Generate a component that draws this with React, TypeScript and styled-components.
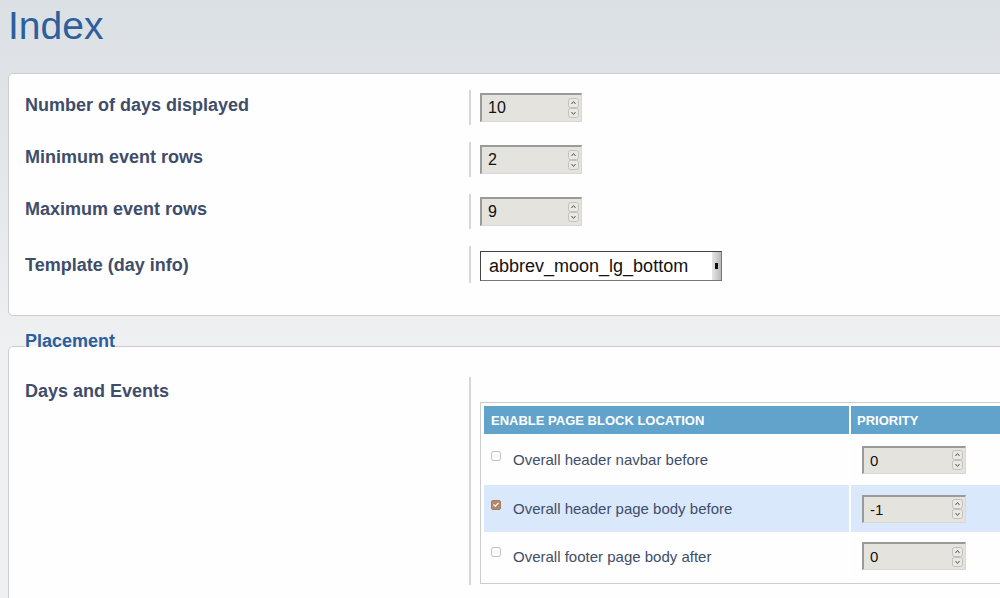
import React from 'react'
import styled, { createGlobalStyle } from 'styled-components'

const GlobalStyle = createGlobalStyle`
  html, body {
    margin: 0;
    padding: 0;
    overflow: hidden;
  }
  body {
    background: #eef0f2 linear-gradient(#dbe0e4 0, #e2e6e9 150px, #eef0f2 340px) no-repeat;
    font-family: "Liberation Sans", Arial, sans-serif;
    min-height: 598px;
  }
`

const Page = styled.div`
  padding-left: 8px;
`

const Title = styled.h1`
  margin: 4px 0 0;
  font-size: 39px;
  font-weight: normal;
  line-height: 44px;
  color: #2d5f9d;
`

const Panel = styled.div`
  margin: 25px -40px 0 0;
  padding: 16px 0 32px 16px;
  background: #fdfefd;
  border: 1px solid #cdcdcd;
  border-radius: 5px;
  display: flex;
  flex-direction: column;
  gap: 17px;
`

const Fieldset = styled.fieldset`
  margin: 15px -40px 0 0;
  padding: 16px 0 40px 16px;
  min-width: 0;
  background: #fdfefd;
  border: 1px solid #cdcdcd;
  border-radius: 5px;
`

const Legend = styled.legend`
  padding: 0 0 10px;
  font-size: 18px;
  line-height: 20px;
  font-weight: bold;
  color: #2b5e9c;
`

const Row = styled.div`
  display: grid;
  grid-template-columns: 444px 1fr;
`

const Label = styled.div<{ $top?: number }>`
  padding-top: ${(p) => p.$top ?? 4}px;
  font-size: 18px;
  line-height: 22px;
  font-weight: bold;
  color: #3f4d6b;
`

const Value = styled.div<{ $pad?: string }>`
  border-left: 2px solid #d6d6d6;
  padding: ${(p) => p.$pad ?? '3px 0 3px 9px'};
`

const NumBox = styled.div<{ $w?: number; $h?: number; $size?: number }>`
  box-sizing: border-box;
  width: ${(p) => p.$w ?? 102}px;
  height: ${(p) => p.$h ?? 29}px;
  display: flex;
  align-items: center;
  justify-content: space-between;
  padding: 0 2px 0 6px;
  background: #e4e3de;
  border-top: 2px solid #9a9a98;
  border-left: 2px solid #9a9a98;
  border-right: 1px solid #d9d8d4;
  border-bottom: 1px solid #d9d8d4;
  font-size: ${(p) => p.$size ?? 16}px;
  color: #111;
`

const SelectBox = styled.div`
  box-sizing: border-box;
  width: 242px;
  height: 30px;
  display: flex;
  align-items: center;
  justify-content: space-between;
  background: #fff;
  border: 1px solid #444;
  border-right-color: #777;
  border-bottom-color: #777;
  padding-left: 8px;
  font-size: 18px;
  color: #111;
`

const SelectArrow = styled.div`
  width: 9px;
  align-self: stretch;
  background: linear-gradient(90deg, #e6e6e6, #b9b9b9);
  display: flex;
  align-items: center;
  justify-content: center;
  &::after {
    content: '';
    width: 3px;
    height: 6px;
    background: #111;
  }
`

const TableBox = styled.div`
  width: 640px;
  margin-top: 22px;
  border: 1px solid #cccccc;
  padding: 3px;
  background: #fdfefd;
`

const Grid = styled.div`
  display: grid;
  grid-template-columns: 365px 1fr;
`

const HeadCell = styled.div<{ $first?: boolean }>`
  height: 28px;
  display: flex;
  align-items: center;
  padding-left: ${(p) => (p.$first ? 7 : 6)}px;
  background: #62a3cc;
  border-left: ${(p) => (p.$first ? 'none' : '2px solid #fff')};
  color: #fff;
  font-size: 13px;
  font-weight: bold;
`

const Cell = styled.div<{ $first?: boolean; $hl?: boolean; $h: number }>`
  height: ${(p) => p.$h}px;
  display: flex;
  align-items: center;
  gap: 12px;
  padding-left: ${(p) => (p.$first ? 7 : 11)}px;
  background: ${(p) => (p.$hl ? '#dae8fb' : 'transparent')};
  border-left: ${(p) => (p.$first ? 'none' : '2px solid #fff')};
  color: #3f4d6b;
  font-size: 15px;
`

const Check = styled.span<{ $on?: boolean }>`
  box-sizing: border-box;
  width: 10px;
  height: 10px;
  margin-top: -8px;
  border-radius: 2px;
  border: 1px solid ${(p) => (p.$on ? '#a67d60' : '#c4c4c4')};
  background: ${(p) => (p.$on ? '#b3896b' : '#fafafa')};
  display: flex;
  align-items: center;
  justify-content: center;
`

const Spinner = () => (
  <svg width="11" height="20" viewBox="0 0 11 20">
    <rect x="0.5" y="0.5" width="10" height="9" rx="2" fill="#e9e8e4" stroke="#c2c1bd" />
    <rect x="0.5" y="10.5" width="10" height="9" rx="2" fill="#e9e8e4" stroke="#c2c1bd" />
    <path d="M3.5 6 L5.5 3.5 L7.5 6" fill="none" stroke="#555" strokeWidth="1" />
    <path d="M3.5 14 L5.5 16.5 L7.5 14" fill="none" stroke="#555" strokeWidth="1" />
  </svg>
)

const NumberInput = ({ value, size, w, h }: { value: string; size?: number; w?: number; h?: number }) => (
  <NumBox $size={size} $w={w} $h={h}>
    <span>{value}</span>
    <Spinner />
  </NumBox>
)

const settings = [
  { label: 'Number of days displayed', value: '10' },
  { label: 'Minimum event rows', value: '2' },
  { label: 'Maximum event rows', value: '9' },
]

const locations = [
  { name: 'Overall header navbar before', on: false, priority: '0', h: 51 },
  { name: 'Overall header page body before', on: true, priority: '-1', h: 47 },
  { name: 'Overall footer page body after', on: false, priority: '0', h: 48 },
]

const App = (): React.ReactElement => {
  return (
    <Page>
      <GlobalStyle />
      <Title>Index</Title>
      <Panel>
        {settings.map((s) => (
          <Row key={s.label}>
            <Label>{s.label}</Label>
            <Value>
              <NumberInput value={s.value} />
            </Value>
          </Row>
        ))}
        <Row>
          <Label $top={8}>Template (day info)</Label>
          <Value $pad="5px 0 2px 9px">
            <SelectBox>
              <span>abbrev_moon_lg_bottom</span>
              <SelectArrow />
            </SelectBox>
          </Value>
        </Row>
      </Panel>
      <Fieldset>
        <Legend>Placement</Legend>
        <Row>
          <Label $top={3}>Days and Events</Label>
          <Value $pad="3px 0 1px 9px">
            <TableBox>
              <Grid>
                <HeadCell $first>ENABLE PAGE BLOCK LOCATION</HeadCell>
                <HeadCell>PRIORITY</HeadCell>
                {locations.map((l) => (
                  <React.Fragment key={l.name}>
                    <Cell $first $hl={l.on} $h={l.h}>
                      <Check $on={l.on}>
                        {l.on && (
                          <svg width="6" height="5" viewBox="0 0 6 5">
                            <path d="M0.5 2.5 L2.3 4.2 L5.5 0.8" fill="none" stroke="#fff" strokeWidth="1.2" />
                          </svg>
                        )}
                      </Check>
                      {l.name}
                    </Cell>
                    <Cell $hl={l.on} $h={l.h}>
                      <NumberInput value={l.priority} size={15} w={104} h={28} />
                    </Cell>
                  </React.Fragment>
                ))}
              </Grid>
            </TableBox>
          </Value>
        </Row>
      </Fieldset>
    </Page>
  )
}

export default App
